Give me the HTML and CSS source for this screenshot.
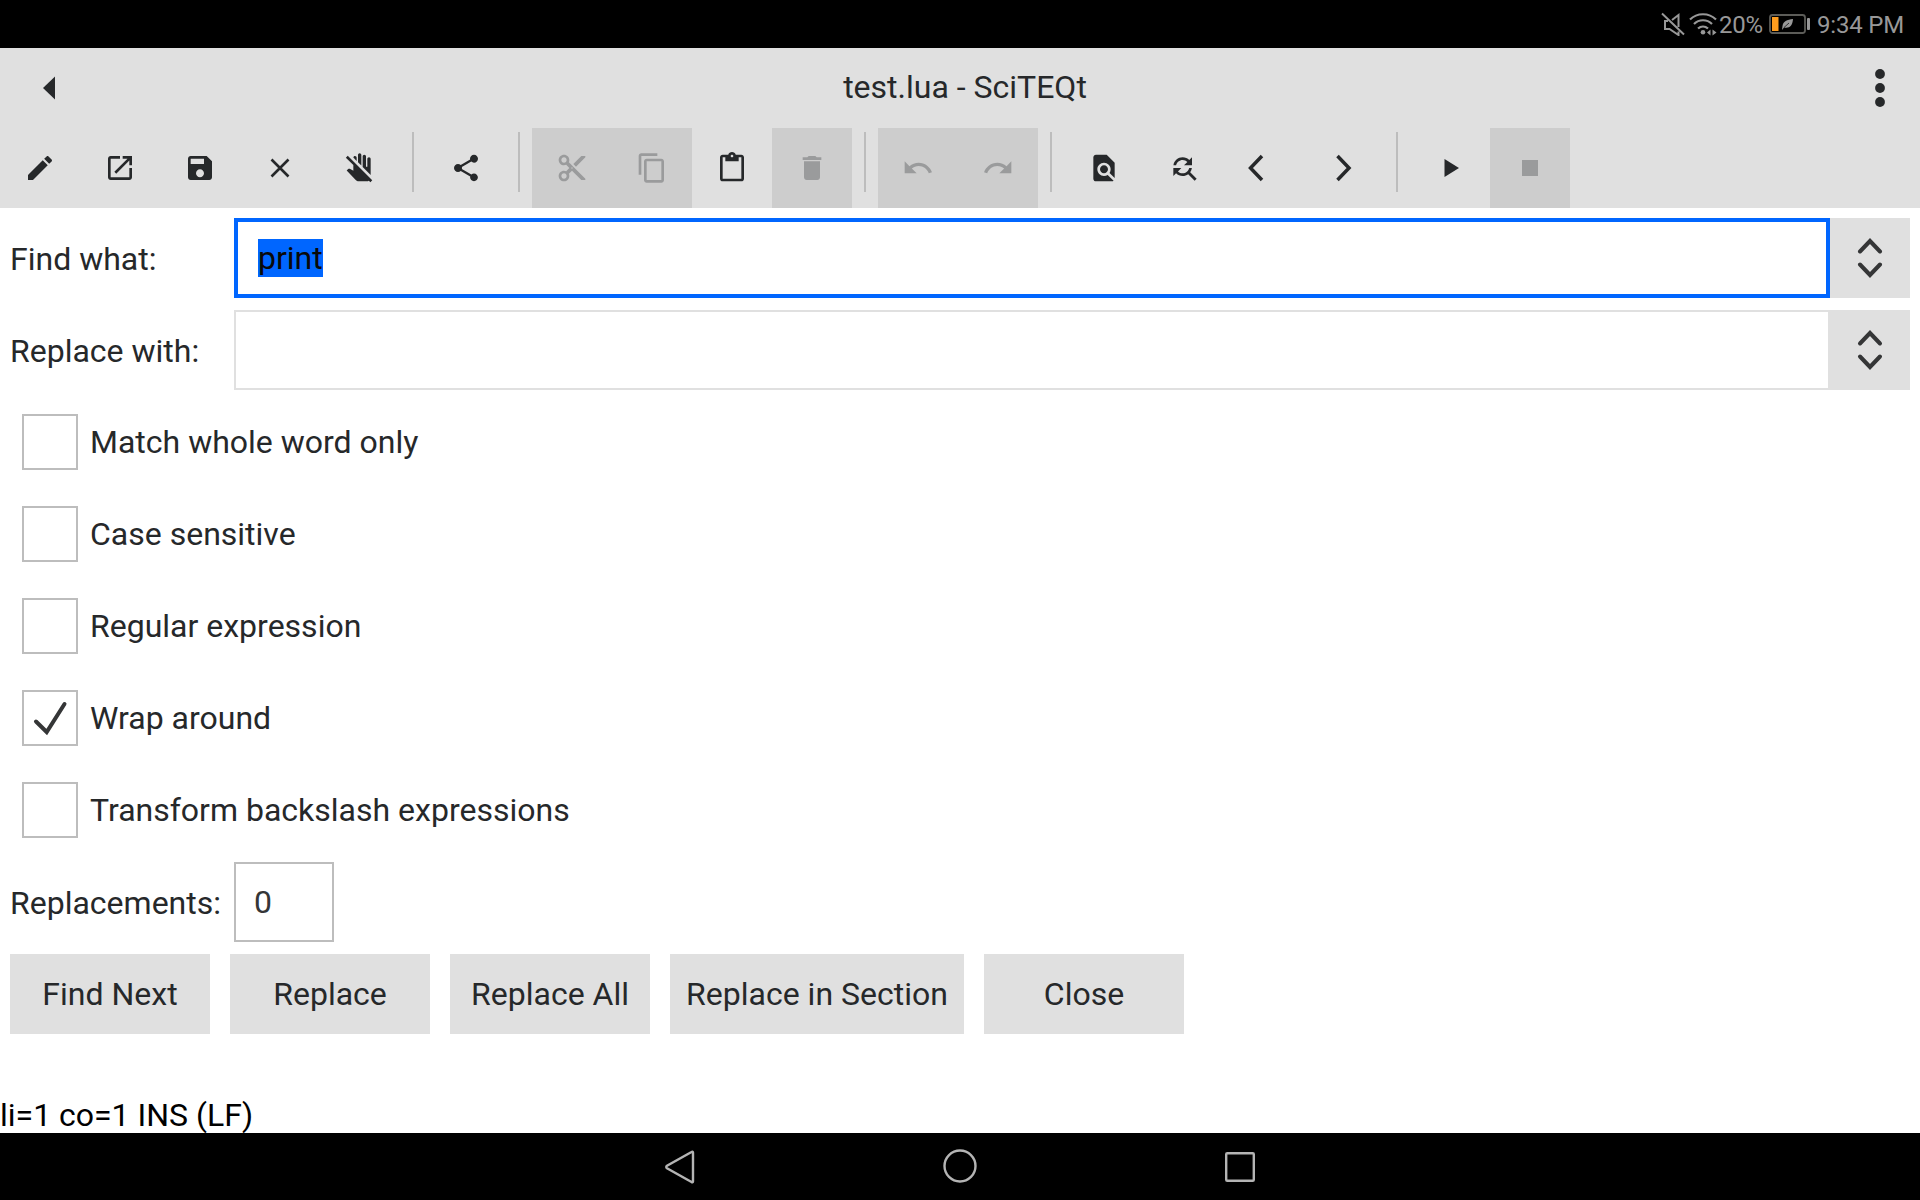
FILE: index.html
```html
<!DOCTYPE html>
<html lang="en">
<head>
<meta charset="utf-8">
<title>test.lua - SciTEQt</title>
<link rel="stylesheet" href="styles.css">
</head>
<body>
<div class="screen">
  <div class="statusbar">
    <svg class="mute" width="24" height="24" viewBox="0 0 24 24" fill="none" stroke="#989898" stroke-width="2"><path d="M17.500 15V3l-6.500 5M7 9H4v8h4.500l9 6v-3.500M1 1.500l22 21"/></svg>
    <svg class="wifi" width="28" height="24" viewBox="0 0 28 24" fill="none" stroke="#989898" stroke-width="2.2"><path d="M1 7.500C8 .5 20 .5 27 7.500M5 12c5-5 13-5 18 0M9 16.500c3-2.700 7-2.700 10 0"/><circle cx="14" cy="20.300" r="2.300" fill="#989898" stroke="none"/><path d="M18 20.500l3.500-3v6zM27.500 20.500l-4-3v6z" fill="#989898" stroke="none"/></svg>
    <span class="percent">20%</span>
    <svg class="battery" width="42" height="22" viewBox="0 0 42 22"><rect x="1" y="2" width="35" height="18" rx="2.500" fill="none" stroke="#5c5c58" stroke-width="1.800"/><rect x="3" y="4" width="6.500" height="14" fill="#ff9d1e"/><rect x="38" y="5" width="3" height="12" rx="1" fill="#989898"/><path d="M24 6c-6 .5-10 2.500-10.500 7L13 17l2-2.500c6 1 8.500-2 9-8.500z" fill="#989898"/><path d="M15 14.500l5-4.500" stroke="#000" stroke-width=".7"/></svg>
    <span class="clock">9:34 PM</span>
  </div>

  <div class="titlebar">
    <div class="back"><svg width="12" height="24" viewBox="0 0 12 24"><path d="M0 12L12 .5v23z"/></svg></div>
    <h1 class="title">test.lua - SciTEQt</h1>
    <div class="menu"><svg width="10" height="38" viewBox="0 0 10 38"><circle cx="5" cy="5" r="4.900"/><circle cx="5" cy="19" r="4.900"/><circle cx="5" cy="33" r="4.900"/></svg></div>
  </div>

  <div class="toolbar">
    <div class="tool"><svg class="icon" viewBox="0 0 24 24"><path d="M3 17.250V21h3.750L17.810 9.940l-3.750-3.750L3 17.250zM20.710 7.040c.39-.39.39-1.020 0-1.410l-2.340-2.340c-.39-.39-1.020-.39-1.410 0l-1.830 1.830 3.750 3.750 1.830-1.830z"/></svg></div>
    <div class="tool"><svg class="icon" viewBox="0 0 24 24"><path d="M19 19H5V5h7V3H5c-1.110 0-2 .9-2 2v14c0 1.100.89 2 2 2h14c1.100 0 2-.9 2-2v-7h-2v7zM14 3v2h3.590l-9.830 9.830 1.410 1.410L19 6.410V10h2V3h-7z"/></svg></div>
    <div class="tool"><svg class="icon" viewBox="0 0 24 24"><path d="M17 3H5c-1.110 0-2 .9-2 2v14c0 1.100.89 2 2 2h14c1.100 0 2-.9 2-2V7l-4-4zm-5 16c-1.660 0-3-1.340-3-3s1.340-3 3-3 3 1.340 3 3-1.340 3-3 3zm3-10H5V5h10v4z"/></svg></div>
    <div class="tool"><svg class="icon" viewBox="0 0 32 32"><path class="line" d="M7.500 7.500l17 17M24.500 7.500l-17 17" stroke-width="2.600"/></svg></div>
    <div class="tool"><svg class="icon" viewBox="0 0 24 24"><path d="M13 10.170l-2.500-2.500V2.250C10.500 1.560 11.060 1 11.750 1S13 1.560 13 2.250v7.920zM20 12.750V5.250C20 4.560 19.440 4 18.750 4s-1.250.56-1.250 1.250V11h-1V3.250C16.500 2.560 15.940 2 15.250 2S14 2.560 14 3.250v7.920l6 6v-4.420zM9.500 4.250C9.500 3.560 8.940 3 8.250 3c-.67 0-1.200.53-1.240 1.180L9.500 6.670V4.250zM2.810 2.810L1.390 4.220 7 9.830v4.300c-1.110-.64-2.580-1.470-2.600-1.480-.17-.09-.34-.14-.54-.14-.26 0-.5.09-.7.26L2 13.880l6.800 7.180c.57.6 1.350.94 2.180.94H17c.62 0 1.180-.19 1.650-.52l1.130 1.130 1.410-1.410L2.810 2.810z"/></svg></div>
    <div class="separator"></div>
    <div class="tool"><svg class="icon" viewBox="0 0 24 24"><path d="M18 16.080c-.76 0-1.440.3-1.960.77L8.910 12.700c.05-.23.09-.46.09-.7s-.04-.47-.09-.7l7.050-4.110c.54.5 1.250.81 2.040.81 1.660 0 3-1.340 3-3s-1.340-3-3-3-3 1.340-3 3c0 .24.04.47.09.7L8.040 9.810C7.500 9.310 6.790 9 6 9c-1.660 0-3 1.340-3 3s1.340 3 3 3c.79 0 1.500-.31 2.040-.81l7.120 4.160c-.05.21-.08.43-.08.65 0 1.610 1.310 2.920 2.920 2.920s2.920-1.310 2.920-2.920-1.310-2.920-2.920-2.920z"/></svg></div>
    <div class="separator"></div>
    <div class="tool disabled"><svg class="icon" viewBox="0 0 24 24"><path d="M9.640 7.640c.23-.5.36-1.050.36-1.640 0-2.210-1.790-4-4-4S2 3.790 2 6s1.790 4 4 4c.59 0 1.140-.13 1.640-.36L10 12l-2.360 2.360C7.140 14.130 6.590 14 6 14c-2.210 0-4 1.790-4 4s1.790 4 4 4 4-1.790 4-4c0-.59-.13-1.140-.36-1.640L12 14l7 7h3v-1L9.640 7.640zM6 8c-1.100 0-2-.89-2-2s.9-2 2-2 2 .89 2 2-.9 2-2 2zm0 12c-1.100 0-2-.89-2-2s.9-2 2-2 2 .89 2 2-.9 2-2 2zm6-7.500c-.28 0-.5-.22-.5-.5s.22-.5.5-.5.5.22.5.5-.22.5-.5.5zM19 3l-6 6 2 2 7-7V3z"/></svg></div>
    <div class="tool disabled"><svg class="icon" viewBox="0 0 24 24"><path d="M16 1H4c-1.100 0-2 .9-2 2v14h2V3h12V1zm3 4H8c-1.100 0-2 .9-2 2v14c0 1.100.9 2 2 2h11c1.100 0 2-.9 2-2V7c0-1.100-.9-2-2-2zm0 16H8V7h11v14z"/></svg></div>
    <div class="tool"><svg class="icon" viewBox="0 0 24 24"><path d="M19 2h-4.180C14.400.84 13.300 0 12 0c-1.300 0-2.400.84-2.820 2H5c-1.100 0-2 .9-2 2v16c0 1.100.9 2 2 2h14c1.100 0 2-.9 2-2V4c0-1.100-.9-2-2-2zm-7 0c.55 0 1 .45 1 1s-.45 1-1 1-1-.45-1-1 .45-1 1-1zm7 18H5V4h2v3h10V4h2v16z"/></svg></div>
    <div class="tool disabled"><svg class="icon" viewBox="0 0 24 24"><path d="M6 19c0 1.100.9 2 2 2h8c1.100 0 2-.9 2-2V7H6v12zM19 4h-3.500l-1-1h-5l-1 1H5v2h14V4z"/></svg></div>
    <div class="separator"></div>
    <div class="tool disabled"><svg class="icon" viewBox="0 0 24 24"><path d="M12.500 8c-2.650 0-5.050.99-6.900 2.600L2 7v9h9l-3.620-3.620c1.390-1.160 3.160-1.880 5.120-1.880 3.540 0 6.550 2.310 7.600 5.500l2.370-.78C21.080 11.030 17.150 8 12.500 8z"/></svg></div>
    <div class="tool disabled"><svg class="icon" viewBox="0 0 24 24"><path d="M18.400 10.600C16.550 8.990 14.150 8 11.500 8c-4.650 0-8.580 3.030-9.960 7.220L3.900 16c1.050-3.190 4.050-5.500 7.600-5.500 1.950 0 3.730.72 5.120 1.880L13 16h9V7l-3.600 3.600z"/></svg></div>
    <div class="separator"></div>
    <div class="tool"><svg class="icon" viewBox="0 0 24 24"><path d="M20 19.590V8l-6-6H6c-1.100 0-1.990.9-1.990 2L4 20c0 1.100.89 2 1.990 2H18c.45 0 .85-.15 1.190-.4l-4.430-4.430c-.8.52-1.740.83-2.760.83-2.760 0-5-2.240-5-5s2.240-5 5-5 5 2.240 5 5c0 1.020-.31 1.960-.83 2.750L20 19.590zM9 13c0 1.660 1.340 3 3 3s3-1.340 3-3-1.340-3-3-3-3 1.340-3 3z"/></svg></div>
    <div class="tool"><svg class="icon" viewBox="0 0 24 24"><path d="M11 6c1.380 0 2.630.56 3.540 1.460L12 10h6V4l-2.050 2.050C14.680 4.780 12.930 4 11 4c-3.530 0-6.430 2.610-6.920 6H6.100c.46-2.280 2.480-4 4.900-4zm5.640 9.140c.66-.9 1.120-1.970 1.280-3.140H15.900c-.46 2.280-2.480 4-4.900 4-1.380 0-2.630-.56-3.540-1.460L10 12H4v6l2.050-2.050C7.320 17.220 9.070 18 11 18c1.550 0 2.980-.51 4.140-1.360L20 21.490 21.490 20l-4.850-4.860z"/></svg></div>
    <div class="tool previous"><svg class="icon" viewBox="0 0 32 32"><path class="line" d="M22 4L10.500 16 22 28" stroke-width="3.500"/></svg></div>
    <div class="tool"><svg class="icon" viewBox="0 0 32 32"><path class="line" d="M9.500 4L21 16 9.500 28" stroke-width="3.500"/></svg></div>
    <div class="separator"></div>
    <div class="tool"><svg class="icon" viewBox="0 0 32 32"><path d="M10.500 7v18L25 16z"/></svg></div>
    <div class="tool disabled"><svg class="icon" viewBox="0 0 32 32"><path d="M8 8h16v16H8z"/></svg></div>
  </div>

  <div class="dialog">
    <div class="field-row">
      <span class="label">Find what:</span>
      <div class="combo focused"><div class="entry"><span class="selection">print</span></div><div class="arrows"><svg width="26" height="40" viewBox="0 0 26 40"><path d="M3 13.500L13 3l10 10.500M3 26.500L13 37l10-10.500"/></svg></div></div>
    </div>
    <div class="field-row">
      <span class="label">Replace with:</span>
      <div class="combo"><div class="entry"></div><div class="arrows"><svg width="26" height="40" viewBox="0 0 26 40"><path d="M3 13.500L13 3l10 10.500M3 26.500L13 37l10-10.500"/></svg></div></div>
    </div>
    <div class="check-row"><span class="box"></span><span>Match whole word only</span></div>
    <div class="check-row"><span class="box"></span><span>Case sensitive</span></div>
    <div class="check-row"><span class="box"></span><span>Regular expression</span></div>
    <div class="check-row"><span class="box"><svg width="52" height="52" viewBox="0 0 52 52"><path d="M12 29.500L22.700 40 40.500 12"/></svg></span><span>Wrap around</span></div>
    <div class="check-row"><span class="box"></span><span>Transform backslash expressions</span></div>
    <div class="field-row">
      <span class="label">Replacements:</span>
      <div class="count">0</div>
    </div>
    <div class="buttons">
      <div class="button">Find Next</div>
      <div class="button">Replace</div>
      <div class="button">Replace All</div>
      <div class="button wide">Replace in Section</div>
      <div class="button">Close</div>
    </div>
  </div>
  <div class="info">li=1 co=1 INS (LF)</div>

  <div class="navbar">
    <svg width="36" height="36" viewBox="0 0 36 36"><path d="M31 3.500v29c0 1-.8 1-1.500.5L5 19.300c-1-.8-1-1.800 0-2.600L29.500 3c.7-.5 1.500-.5 1.500.5z"/></svg>
    <svg width="36" height="36" viewBox="0 0 36 36"><circle cx="18" cy="17" r="15.500"/></svg>
    <svg width="36" height="36" viewBox="0 0 36 36"><rect x="4.200" y="4.200" width="27.600" height="27.600" rx="1"/></svg>
  </div>
</div>
</body>
</html>
```

FILE: styles.css
```css
* { box-sizing: border-box; }

body {
  margin: 0;
  background: #fff;
  color: #26282a;
  font: 32px/38px Roboto, sans-serif;
}

svg { display: block; flex: none; }

.screen {
  display: flex;
  flex-direction: column;
  width: 1920px;
  height: 1200px;
  overflow: hidden;
}

.statusbar {
  display: flex;
  flex: none;
  align-items: center;
  height: 48px;
  padding-left: 1661px;
  background: #000;
  color: #989898;
  font-size: 24px;
  letter-spacing: -0.2px;
  white-space: nowrap;
}

.wifi { margin-left: 4px; }
.percent { width: 50px; margin-left: 2px; padding-top: 1px; }
.clock { margin-left: 6px; padding-top: 1px; }

.titlebar {
  display: flex;
  flex: none;
  align-items: center;
  height: 80px;
  background: #e0e0e0;
}

.back, .menu { display: flex; justify-content: center; }
.back { width: 98px; }
.menu { width: 80px; }
.titlebar svg { fill: #26282a; }

.title {
  flex: 1;
  margin: 0;
  padding: 0 8px 2px 0;
  font-size: 32px;
  font-weight: 400;
  text-align: center;
}

.toolbar {
  display: flex;
  flex: none;
  height: 80px;
  background: #e0e0e0;
}

.tool {
  display: flex;
  align-items: center;
  justify-content: center;
  width: 80px;
  color: #26282a;
}

.tool.disabled { background: #cdcdcd; color: #9a9b9c; }
.tool.previous { padding-right: 16px; }

.icon { width: 32px; height: 32px; fill: currentColor; }
.icon .line { fill: none; stroke: currentColor; }

.separator {
  width: 2px;
  height: 60px;
  margin: 4px 12px 0;
  background: #bdbdbd;
}

.dialog {
  display: flex;
  flex: 1;
  flex-direction: column;
  gap: 12px;
  padding: 10px 10px 0;
}

.field-row { display: flex; align-items: center; height: 80px; }
.label { width: 224px; padding-top: 2px; }
.combo { display: flex; flex: 1; }

.entry {
  display: flex;
  flex: 1;
  align-items: center;
  height: 80px;
  padding-left: 22px;
  border: 2px solid #e0e0e0;
}

.focused .entry { padding-left: 20px; border: 4px solid #0066ff; }
.selection { background: #0066ff; color: #090909; }

.arrows {
  display: flex;
  align-items: center;
  justify-content: center;
  width: 80px;
  background: #e0e0e0;
}

.arrows path, .box path {
  fill: none;
  stroke: #353637;
  stroke-width: 4;
  stroke-linecap: round;
}

.check-row {
  display: flex;
  align-items: center;
  gap: 12px;
  height: 80px;
  padding-left: 12px;
}

.box { width: 56px; height: 56px; border: 2px solid #bdbdbd; }

.count {
  display: flex;
  align-items: center;
  width: 100px;
  height: 80px;
  padding-left: 18px;
  border: 2px solid #bdbdbd;
  color: #353637;
}

.buttons { display: flex; gap: 20px; }

.button {
  width: 200px;
  height: 80px;
  background: #e0e0e0;
  line-height: 80px;
  text-align: center;
}

.button.wide { width: 294px; }

.info { flex: none; height: 37px; color: #000; }

.navbar {
  display: flex;
  flex: none;
  align-items: center;
  justify-content: center;
  gap: 244px;
  height: 67px;
  background: #000;
}

.navbar svg { fill: none; stroke: #b4b4b4; stroke-width: 2.4; }
```
